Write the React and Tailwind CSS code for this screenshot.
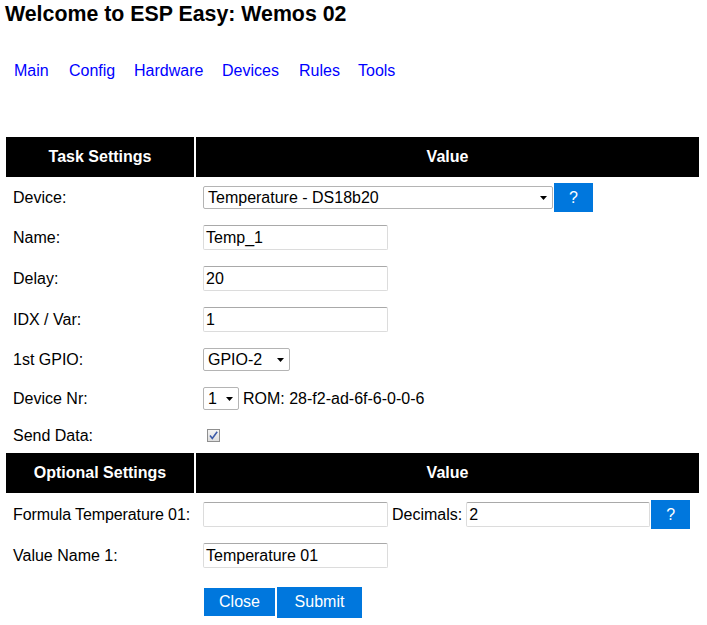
import React from "react";

const Arrow = () => (
  <svg width="7" height="4" viewBox="0 0 7 4" className="shrink-0">
    <polygon points="0,0 7,0 3.5,4" fill="#000" />
  </svg>
);

const Select = ({ value, className }) => (
  <div
    className={
      "flex items-center justify-between h-[23px] pl-[4px] pr-[5px] bg-white border border-[#b4b4b4] rounded-[2px] " +
      className
    }
  >
    <span className="leading-[18px] whitespace-nowrap">{value}</span>
    <Arrow />
  </div>
);

const Input = ({ value = "", className = "w-[185px]" }) => (
  <div
    className={
      "h-[25px] bg-white border border-[#dcdcdc] border-t-[#a9a9a9] rounded-[2px] pl-[2px] flex items-center " +
      className
    }
  >
    <span className="leading-[18px] whitespace-nowrap">{value}</span>
  </div>
);

const Help = () => (
  <a
    href="#"
    className="flex items-center justify-center w-[41px] h-[31px] -my-[4px] bg-[#0077dd] border border-white text-white no-underline leading-[18px]"
  >
    ?
  </a>
);

const Header = ({ left }) => (
  <>
    <div className="h-[40px] bg-black text-white font-bold flex items-center justify-center leading-[18px]">
      {left}
    </div>
    <div className="h-[40px] bg-black text-white font-bold flex items-center justify-center leading-[18px]">
      Value
    </div>
  </>
);

const Row = ({ label, h = "h-[39px]", children }) => (
  <>
    <div className={"flex items-center pl-[7px] pt-[1px] leading-[18px] whitespace-nowrap " + h}>{label}</div>
    <div className={"flex items-center px-[7px] leading-[18px] " + h}>{children}</div>
  </>
);

export default function App() {
  const links = [
    ["Main", "w-[55px]"],
    ["Config", "w-[65px]"],
    ["Hardware", "w-[88px]"],
    ["Devices", "w-[77px]"],
    ["Rules", "w-[59px]"],
    ["Tools", "w-[50px]"],
  ];
  return (
    <div className="font-['Liberation_Sans',Arial,sans-serif] text-[16px] text-black bg-white min-h-screen">
      <h1 className="mt-[2px] pl-[5px] text-[21.33px] font-bold leading-[25px] h-[25px]">
        Welcome to ESP Easy: Wemos 02
      </h1>

      <nav className="mt-[35px] pl-[14px] flex leading-[18px]">
        {links.map(([l, w]) => (
          <div key={l} className={w}>
            <a href="#" className="text-[#0000ff] no-underline">
              {l}
            </a>
          </div>
        ))}
      </nav>

      <div className="mt-[55px] ml-[4px] w-[697px] p-[2px] grid grid-cols-[188px_503px] gap-[2px]">
        <Header left="Task Settings" />

        <Row label="Device:" h="h-[37px]">
          <Select value="Temperature - DS18b20" className="w-[350px]" />
          <Help />
        </Row>
        <Row label="Name:">
          <Input value="Temp_1" />
        </Row>
        <Row label="Delay:">
          <Input value="20" />
        </Row>
        <Row label="IDX / Var:">
          <Input value="1" />
        </Row>
        <Row label="1st GPIO:" h="h-[37px]">
          <Select value="GPIO-2" className="w-[87px]" />
        </Row>
        <Row label="Device Nr:" h="h-[37px]">
          <Select value="1" className="w-[36px] h-[22px]" />
          <span className="ml-[4px] whitespace-nowrap">ROM: 28-f2-ad-6f-6-0-0-6</span>
        </Row>
        <Row label="Send Data:" h="h-[32px]">
          <div className="ml-[4px] mt-[1px] w-[13px] h-[13px] border border-[#8f8f8f] bg-gradient-to-b from-[#f4f4f4] to-[#dedede] flex items-center justify-center">
            <svg width="11" height="11" viewBox="0 0 11 11">
              <path
                d="M2 5.5 L4.3 8.5 L9.2 1.8"
                fill="none"
                stroke="#3c5aa8"
                strokeWidth="1.6"
              />
            </svg>
          </div>
        </Row>

        <Header left="Optional Settings" />

        <Row label={<span className="tracking-[-0.1px]">Formula Temperature 01:</span>}>
          <Input value="" />
          <span className="ml-[4px] whitespace-nowrap">Decimals:</span>
          <Input value="2" className="ml-[4px] w-[184px]" />
          <Help />
        </Row>
        <Row label="Value Name 1:">
          <Input value="Temperature 01" />
        </Row>
        <Row label="" h="h-[50px]">
          <a
            href="#"
            className="flex items-center justify-center w-[73px] h-[30px] bg-[#0077dd] border border-white text-white no-underline"
          >
            Close
          </a>
          <button className="ml-[1px] flex items-center justify-center w-[85px] h-[31px] bg-[#0077dd] text-white">
            Submit
          </button>
        </Row>
      </div>
    </div>
  );
}
